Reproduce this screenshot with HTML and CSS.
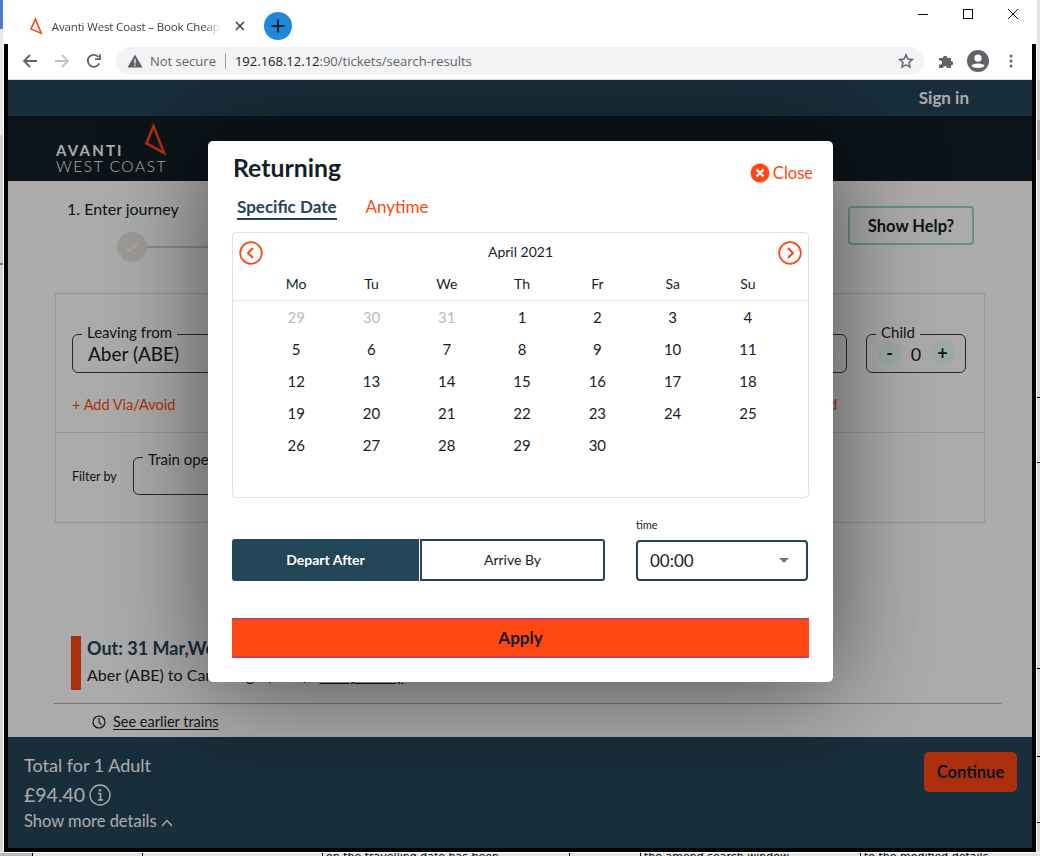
FILE: index.html
```html
<!DOCTYPE html>
<html lang="en">
<head>
    <meta charset="UTF-8">
    <meta name="viewport" content="width=device-width, initial-scale=1.0">
    <title>Avanti West Coast</title>

    <link rel="stylesheet" href="styles.css">
</head>
<body>
    <div class="side-left"></div>

    <div class="window">
        <div class="tabbar">
            <div class="tab">
                <svg class="favicon" width="14" height="18" viewBox="0 0 14 18"><path d="M6.5 2 L2 12 L12.5 16.5 Z" fill="none" stroke="#ff4713" stroke-width="1.6"/></svg>
                <span class="tab-title">Avanti West Coast – Book Cheap</span>
                <svg class="tab-x" width="10" height="10" viewBox="0 0 10 10"><path d="M1 1 L9 9 M9 1 L1 9" stroke="#3c4043" stroke-width="1.6"/></svg>
            </div>
            <div class="new-tab">
                <svg width="14" height="14" viewBox="0 0 14 14"><path d="M7 0.5 V13.5 M0.5 7 H13.5" stroke="#172530" stroke-width="2"/></svg>
            </div>
            <div class="win-controls">
                <svg width="12" height="12" viewBox="0 0 12 12"><path d="M1 6.5 H11" stroke="#111" stroke-width="1"/></svg>
                <svg width="12" height="12" viewBox="0 0 12 12"><rect x="1.5" y="1.5" width="9" height="9" fill="none" stroke="#111" stroke-width="1"/></svg>
                <svg width="12" height="12" viewBox="0 0 12 12"><path d="M1 1 L11 11 M11 1 L1 11" stroke="#111" stroke-width="1"/></svg>
            </div>
        </div>

        <div class="frame">
            <div class="toolbar">
                <svg class="tool" width="16" height="16" viewBox="0 0 16 16"><path d="M15 8 H2 M8 2 L2 8 L8 14" fill="none" stroke="#5f6368" stroke-width="1.8"/></svg>
                <svg class="tool" width="16" height="16" viewBox="0 0 16 16"><path d="M1 8 H14 M8 2 L14 8 L8 14" fill="none" stroke="#bdc1c6" stroke-width="1.8"/></svg>
                <svg class="tool" width="16" height="16" viewBox="0 0 16 16"><path d="M13.2 10.5 A6 6 0 1 1 12.5 4 M14 1.2 V6.2 H9" fill="none" stroke="#5f6368" stroke-width="1.8"/></svg>
                <div class="omnibox">
                    <svg width="16" height="14" viewBox="0 0 16 14"><path d="M8 0.5 L15.5 13.5 H0.5 Z" fill="#5f6368"/><path d="M8 5 V9.5 M8 10.5 V12" stroke="#f1f3f4" stroke-width="1.3"/></svg>
                    <span class="not-secure">Not secure</span>
                    <span class="omni-sep"></span>
                    <span class="url"><b>192.168.12.12</b>:90/tickets/search-results</span>
                    <svg class="star" width="16" height="16" viewBox="0 0 16 16"><path d="M8 1.8 L9.9 6 L14.4 6.5 L11 9.5 L12 14 L8 11.7 L4 14 L5 9.5 L1.6 6.5 L6.1 6 Z" fill="none" stroke="#5f6368" stroke-width="1.4"/></svg>
                </div>
                <svg class="puzzle" width="16" height="16" viewBox="0 0 16 16"><path d="M1 5 H5 A2.2 2.2 0 1 1 9.4 5 H13 V8 A2.2 2.2 0 1 1 13 12.4 V15 H9 A2 2 0 0 0 5 15 H1 V11.5 A2.2 2.2 0 1 0 1 7.5 Z" fill="#5f6368"/></svg>
                <svg class="avatar" width="22" height="22" viewBox="0 0 22 22"><circle cx="11" cy="11" r="11" fill="#5f6368"/><circle cx="11" cy="8.2" r="3.6" fill="#fff"/><path d="M4.4 16 C6 12.8 16 12.8 17.6 16 C15.8 18.6 6.2 18.6 4.4 16 Z" fill="#fff"/></svg>
                <svg class="dots" width="4" height="14" viewBox="0 0 4 14"><circle cx="2" cy="2" r="1.5" fill="#5f6368"/><circle cx="2" cy="7" r="1.5" fill="#5f6368"/><circle cx="2" cy="12" r="1.5" fill="#5f6368"/></svg>
            </div>

            <div class="page">
                <div class="topbar"><a class="signin">Sign in</a></div>

                <header class="site-header">
                    <div class="logo">
                        <div class="logo-avanti">AVANTI</div>
                        <div class="logo-west">WEST COAST</div>
                        <svg class="logo-mark" width="24" height="34" viewBox="0 0 24 34"><path d="M9.5 3 L2.5 20.5 L20 30 Z" fill="none" stroke="#ff4713" stroke-width="2.6"/></svg>
                    </div>
                </header>

                <main class="content">
                    <div class="steps">
                        <div class="step">
                            <div class="step-name">1. Enter journey</div>
                            <div class="step-track">
                                <span class="step-dot">
                                    <svg width="14" height="12" viewBox="0 0 14 12"><path d="M1.5 6.5 L5 10 L12.5 2" fill="none" stroke="#fff" stroke-width="1.6"/></svg>
                                </span>
                                <span class="step-line"></span>
                            </div>
                        </div>
                        <button class="help-btn">Show Help?</button>
                    </div>

                    <section class="search-box">
                        <div class="search-main">
                            <div class="field-row">
                                <fieldset class="field field-from">
                                    <legend>Leaving from</legend>
                                    <div class="field-value">Aber (ABE)</div>
                                </fieldset>
                                <fieldset class="field field-count">
                                    <legend>Adult</legend>
                                    <div class="counter">
                                        <span class="count-btn">-</span>
                                        <span class="count-num">1</span>
                                        <span class="count-btn">+</span>
                                    </div>
                                </fieldset>
                                <fieldset class="field field-count">
                                    <legend>Child</legend>
                                    <div class="counter">
                                        <span class="count-btn">-</span>
                                        <span class="count-num">0</span>
                                        <span class="count-btn">+</span>
                                    </div>
                                </fieldset>
                            </div>
                            <div class="link-row">
                                <a>+ Add Via/Avoid</a>
                                <a class="link-railcard">+ Add Railcard</a>
                            </div>
                        </div>
                        <div class="search-filter">
                            <span class="filter-label">Filter by</span>
                            <fieldset class="field field-operator">
                                <legend>Train operator</legend>
                            </fieldset>
                        </div>
                    </section>

                    <section class="journey">
                        <div class="journey-bar"></div>
                        <div>
                            <div class="journey-title">Out: 31 Mar,Wed</div>
                            <div class="journey-route">Aber (ABE) to Cambridge (CBG), <u>Edit journey</u>.</div>
                        </div>
                    </section>

                    <div class="earlier">
                        <svg width="14" height="14" viewBox="0 0 14 14"><circle cx="7" cy="7" r="6" fill="none" stroke="#111" stroke-width="1.1"/><path d="M7 3 V7 L9.5 10" fill="none" stroke="#111" stroke-width="1.1"/></svg>
                        <u>See earlier trains</u>
                    </div>
                </main>

                <footer class="basket">
                    <div class="basket-info">
                        <div class="basket-label">Total for 1 Adult</div>
                        <div class="basket-price">
                            £94.40
                            <svg width="22" height="22" viewBox="0 0 22 22"><circle cx="11" cy="11" r="10" fill="none" stroke="#fff" stroke-width="1.4"/><path d="M9 9.5 H11.5 V16 M9 16 H14" fill="none" stroke="#fff" stroke-width="1.6"/><circle cx="11" cy="6.3" r="1.2" fill="#fff"/></svg>
                        </div>
                        <div class="basket-more">
                            Show more details
                            <svg width="12" height="8" viewBox="0 0 12 8"><path d="M1 7 L6 1.5 L11 7" fill="none" stroke="#fff" stroke-width="1.4"/></svg>
                        </div>
                    </div>
                    <button class="continue-btn">Continue</button>
                </footer>

                <div class="overlay"></div>

                <div class="modal">
                    <div class="modal-head">
                        <h2>Returning</h2>
                        <a class="close">
                            <svg width="20" height="20" viewBox="0 0 20 20"><circle cx="10" cy="10" r="9.5" fill="#ff4713"/><path d="M6.5 6.5 L13.5 13.5 M13.5 6.5 L6.5 13.5" stroke="#fff" stroke-width="2.4"/></svg>
                            Close
                        </a>
                    </div>

                    <div class="tabs">
                        <a class="tab-on">Specific Date</a>
                        <a class="tab-off">Anytime</a>
                    </div>

                    <div class="calendar">
                        <div class="cal-head">
                            <svg width="24" height="24" viewBox="0 0 24 24"><circle cx="12" cy="12" r="10.8" fill="none" stroke="#ff4713" stroke-width="1.8"/><path d="M14 7 L9 12 L14 17" fill="none" stroke="#ff4713" stroke-width="2"/></svg>
                            <span class="cal-month">April 2021</span>
                            <svg width="24" height="24" viewBox="0 0 24 24"><circle cx="12" cy="12" r="10.8" fill="none" stroke="#ff4713" stroke-width="1.8"/><path d="M10 7 L15 12 L10 17" fill="none" stroke="#ff4713" stroke-width="2"/></svg>
                        </div>
                        <div class="cal-grid cal-week">
                            <span>Mo</span><span>Tu</span><span>We</span><span>Th</span><span>Fr</span><span>Sa</span><span>Su</span>
                        </div>
                        <div class="cal-grid cal-days">
                            <span class="muted">29</span><span class="muted">30</span><span class="muted">31</span><span>1</span><span>2</span><span>3</span><span>4</span>
                            <span>5</span><span>6</span><span>7</span><span>8</span><span>9</span><span>10</span><span>11</span>
                            <span>12</span><span>13</span><span>14</span><span>15</span><span>16</span><span>17</span><span>18</span>
                            <span>19</span><span>20</span><span>21</span><span>22</span><span>23</span><span>24</span><span>25</span>
                            <span>26</span><span>27</span><span>28</span><span>29</span><span>30</span>
                        </div>
                    </div>

                    <div class="when-row">
                        <div class="toggle">
                            <button class="toggle-on">Depart After</button>
                            <button class="toggle-off">Arrive By</button>
                        </div>
                        <div class="time-wrap">
                            <div class="time-label">time</div>
                            <div class="time-select">
                                <span>00:00</span>
                                <i class="caret"></i>
                            </div>
                        </div>
                    </div>

                    <button class="apply-btn">Apply</button>
                </div>
            </div>
        </div>
    </div>

    <div class="side-right"></div>

    <div class="desktop-strip">
        <span></span>
        <span></span>
        <span></span>
        <span>on the travelling date has been</span>
        <span></span>
        <span>the amend search window</span>
        <span>to the modified details</span>
    </div>
</body>
</html>
```

FILE: styles.css
```css
* {
    box-sizing: border-box;
}

body {
    margin: 0;
    width: 1040px;
    height: 856px;
    overflow: hidden;
    display: grid;
    grid-template-columns: 3px 1034px 3px;
    grid-template-rows: 852px 4px;
    background-color: #d6d6d6;
    font-family: Lato, sans-serif;
    color: #141e28;
}

button {
    font-family: inherit;
    cursor: pointer;
}

u {
    text-underline-offset: 2px;
}

.side-left {
    background: linear-gradient(#4f78d8 0 29px, #e8e8e8 29px 135px, #cfcfcf 135px 263px, #3a9a3a 263px 265px, #d4d4d4 265px);
}

.side-right {
    background: linear-gradient(#e4e4e4 0 80px, #cfcfcf 80px 120px, #a8a8a8 120px 160px, #d8d8d8 160px 397px, #000 397px 398px, #d8d8d8 398px 462px, #000 462px 463px, #d8d8d8 463px 668px, #000 668px 669px, #d8d8d8 669px 756px, #000 756px 757px, #d8d8d8 757px 822px, #000 822px 823px, #d8d8d8 823px);
}

.window {
    background-color: #fff;
    display: flex;
    flex-direction: column;
}

/* browser chrome */
.tabbar {
    height: 44px;
    display: flex;
    align-items: center;
    padding-top: 8px;
    padding-left: 26px;
}

.tab {
    width: 216px;
    display: flex;
    align-items: center;
}

.favicon {
    margin-right: 9px;
}

.tab-title {
    width: 172px;
    white-space: nowrap;
    overflow: hidden;
    font-family: "Open Sans", sans-serif;
    font-size: 11.5px;
    letter-spacing: -0.15px;
    color: #3c4043;
    -webkit-mask-image: linear-gradient(to right, #000 90%, transparent);
    mask-image: linear-gradient(to right, #000 90%, transparent);
}

.tab-x {
    margin-left: 14px;
}

.new-tab {
    width: 28px;
    height: 28px;
    margin-left: 19px;
    border-radius: 50%;
    background-color: #1e88dc;
    display: flex;
    align-items: center;
    justify-content: center;
}

.win-controls {
    margin-left: auto;
    margin-top: -24px;
    margin-right: 18px;
    display: flex;
    gap: 33px;
}

.frame {
    flex: 1;
    margin: 0 1px;
    border-left: 4px solid #000;
    border-right: 4px solid #000;
    border-bottom: 4px solid #000;
    display: flex;
    flex-direction: column;
}

.toolbar {
    height: 36px;
    display: flex;
    align-items: center;
    padding-bottom: 1px;
    padding-left: 14px;
    background-color: #fff;
    border-bottom: 1px solid #dadce0;
}

.tool {
    margin-right: 16px;
}

.omnibox {
    width: 808px;
    height: 28px;
    margin-left: -2px;
    padding: 0 10px 0 11px;
    border-radius: 14px;
    background-color: #f1f3f4;
    display: flex;
    align-items: center;
    font-family: "Open Sans", sans-serif;
    font-size: 13px;
    color: #5f6368;
}

.not-secure {
    margin-left: 7px;
}

.omni-sep {
    width: 1px;
    height: 16px;
    margin: 0 9px;
    background-color: #9aa0a6;
}

.url b {
    font-weight: 400;
    color: #202124;
}

.star {
    margin-left: auto;
}

.puzzle {
    margin-left: 14px;
}

.avatar {
    margin-left: 13px;
}

.dots {
    margin-left: 20px;
}

/* page */
.page {
    position: relative;
    flex: 1;
    overflow: hidden;
    background-color: #fff;
    display: flex;
    flex-direction: column;
}

.topbar {
    height: 36px;
    padding-right: 63px;
    padding-bottom: 2px;
    background-color: #254557;
    display: flex;
    align-items: center;
    justify-content: flex-end;
}

.signin {
    color: #fff;
    font-size: 17px;
    font-weight: 700;
}

.site-header {
    height: 65px;
    padding-left: 48px;
    background-color: #131e28;
}

.logo {
    position: relative;
    padding-top: 27px;
    color: #fff;
}

.logo-avanti {
    font-size: 15px;
    line-height: 15px;
    font-weight: 700;
    letter-spacing: 2.2px;
}

.logo-west {
    font-size: 15.5px;
    line-height: 17px;
    font-weight: 300;
    letter-spacing: 1.55px;
}

.logo-mark {
    position: absolute;
    left: 88px;
    top: 7px;
}

.content {
    flex: 1;
    position: relative;
}

.steps {
    height: 112px;
    padding: 20px 58px 0 59px;
    display: flex;
    justify-content: space-between;
    align-items: flex-start;
}

.step-name {
    font-size: 16px;
    line-height: 20px;
    margin-top: -2px;
}

.step-track {
    display: flex;
    align-items: center;
    margin-top: 13px;
    margin-left: 50px;
}

.step-dot {
    width: 30px;
    height: 30px;
    border-radius: 50%;
    background-color: #ece8e0;
    display: flex;
    align-items: center;
    justify-content: center;
}

.step-line {
    width: 100px;
    height: 2px;
    background-color: #d6d2ca;
}

.help-btn {
    width: 126px;
    height: 39px;
    margin-top: 5px;
    border: 2px solid #8cdebf;
    border-radius: 4px;
    background-color: #fff;
    color: #141e28;
    font-size: 16.5px;
    font-weight: 700;
}

.search-box {
    margin: 0 47px;
    height: 230px;
    border: 1px solid #e3e3d7;
}

.search-main {
    height: 139px;
    padding: 30px 18px 0 16px;
    border-bottom: 1px solid #e3e3d7;
}

.field-row {
    display: flex;
    gap: 19px;
}

.field {
    margin: 0;
    padding: 0;
    height: 49px;
    min-width: 0;
    border: 1px solid #254557;
    border-radius: 6px;
}

.field legend {
    margin-left: 9px;
    padding: 0 5px 4px;
    font-size: 15px;
    line-height: 16px;
}

.field-from {
    width: 300px;
    margin-right: auto;
}

.field-value {
    padding-left: 15px;
    font-size: 19px;
    line-height: 25px;
    margin-top: -3px;
}

.field-count {
    width: 100px;
}

.counter {
    display: flex;
    align-items: center;
    justify-content: space-between;
    padding: 0 10px;
    margin-top: -3px;
}

.count-btn {
    width: 25px;
    height: 25px;
    border-radius: 50%;
    background-color: #ebfff5;
    font-weight: 700;
    font-size: 18px;
    line-height: 24px;
    text-align: center;
}

.count-num {
    font-size: 18px;
}

.link-row {
    display: flex;
    justify-content: space-between;
    margin-top: 22px;
    color: #ff4713;
    font-size: 14.5px;
    line-height: 20px;
}

.link-railcard {
    margin-right: 129px;
}

.search-filter {
    height: 89px;
    padding: 14px 16px 0;
    display: flex;
    align-items: flex-start;
}

.filter-label {
    font-size: 12.5px;
    margin-top: 22px;
    width: 61px;
}

.field-operator {
    width: 300px;
    height: 48px;
}

.field-operator legend {
    padding: 4px 5px 0;
}

.journey {
    position: absolute;
    left: 63px;
    top: 455px;
    height: 54px;
    display: flex;
    gap: 6px;
}

.journey-bar {
    width: 10px;
    background-color: #ff4713;
}

.journey-title {
    font-size: 18px;
    line-height: 24px;
    font-weight: 700;
    color: #254557;
}

.journey-route {
    margin-top: 4px;
    font-size: 16px;
    line-height: 22px;
}

.journey-route u {
    margin-left: 4px;
}

.earlier {
    position: absolute;
    left: 46px;
    right: 31px;
    top: 522px;
    height: 34px;
    padding: 2px 0 0 38px;
    border-top: 1px solid #b0b0b0;
    display: flex;
    align-items: center;
    gap: 7px;
    font-size: 14.5px;
}

.basket {
    height: 111px;
    padding: 15px 15px 0 16px;
    background-color: #254557;
    color: #fff;
    display: flex;
    justify-content: space-between;
    align-items: flex-start;
}

.basket-label {
    font-size: 18px;
    line-height: 26px;
}

.basket-price {
    margin-top: 3px;
    font-size: 19.5px;
    line-height: 28px;
    display: flex;
    align-items: center;
    gap: 4px;
}

.basket-more {
    font-size: 16.5px;
    line-height: 24px;
}

.continue-btn {
    width: 93px;
    height: 40px;
    border: none;
    border-radius: 5px;
    background-color: #ff4713;
    color: #141e28;
    font-size: 16.5px;
    font-weight: 700;
}

.overlay {
    position: absolute;
    inset: 0;
    background-color: rgba(0, 0, 0, 0.33);
}

/* returning date modal */
.modal {
    position: absolute;
    left: 200px;
    top: 61px;
    width: 625px;
    height: 541px;
    padding: 12px 24px 0;
    border-radius: 5px;
    background-color: #fff;
    box-shadow: 0 4px 100px rgba(0, 0, 0, 0.55);
}

.modal-head {
    display: flex;
    justify-content: space-between;
}

.modal-head h2 {
    margin: 0 0 0 1px;
    font-size: 24.8px;
    line-height: 30px;
    font-weight: 700;
}

.close {
    margin-top: 10px;
    margin-right: -4px;
    height: 20px;
    display: flex;
    align-items: center;
    gap: 3px;
    color: #ff4713;
    font-size: 16.5px;
}

.tabs {
    margin-top: 13px;
    padding-left: 5px;
    display: flex;
    gap: 29px;
    font-size: 17px;
    line-height: 22px;
}

.tab-on {
    height: 24px;
    border-bottom: 2px solid #254557;
    font-weight: 700;
    color: #254557;
}

.tab-off {
    color: #ff4713;
}

.calendar {
    margin-top: 12px;
    height: 266px;
    border: 1px solid #e0e0e0;
    border-radius: 4px;
}

.cal-head {
    height: 40px;
    padding: 0 6px;
    display: flex;
    justify-content: space-between;
    align-items: center;
    font-size: 14px;
}

.cal-month {
    margin-bottom: 3px;
}

.cal-grid {
    display: grid;
    grid-template-columns: repeat(7, 75.3px);
    padding-left: 25.5px;
    text-align: center;
}

.cal-week {
    height: 28px;
    padding-top: 2px;
    border-bottom: 1px solid #e0e0e0;
    font-size: 14px;
    line-height: 18px;
}

.cal-days {
    grid-auto-rows: 32px;
    font-size: 15px;
    line-height: 32px;
}

.muted {
    color: #b8bcc0;
}

.when-row {
    margin-top: 20px;
    padding-right: 1px;
    display: flex;
    justify-content: space-between;
    align-items: flex-end;
}

.toggle {
    display: flex;
    gap: 1px;
}

.toggle button {
    height: 42px;
    padding-bottom: 2px;
    font-size: 14px;
}

.toggle-on {
    width: 187px;
    border: none;
    border-radius: 3px 0 0 3px;
    background-color: #234658;
    color: #fff;
    font-weight: 700;
}

.toggle-off {
    width: 185px;
    border: 2px solid #234658;
    border-radius: 0 3px 3px 0;
    background-color: #fff;
    color: #141e28;
}

.time-label {
    font-size: 11px;
    line-height: 14px;
    margin-bottom: 8px;
}

.time-select {
    width: 172px;
    height: 41px;
    padding: 0 17px 0 12px;
    border: 2px solid #234658;
    border-radius: 4px;
    display: flex;
    justify-content: space-between;
    align-items: center;
    font-size: 17px;
}

.caret {
    width: 0;
    height: 0;
    border-left: 5px solid transparent;
    border-right: 5px solid transparent;
    border-top: 5px solid #777;
}

.apply-btn {
    width: 577px;
    height: 40px;
    margin-top: 37px;
    padding-bottom: 3px;
    border: none;
    border-top: 2px solid #c8434f;
    border-bottom: 2px solid #c8434f;
    background-color: #ff4713;
    color: #141e28;
    font-size: 17px;
    font-weight: 700;
}

.desktop-strip {
    grid-column: 1 / -1;
    display: grid;
    grid-template-columns: 32px 110px 180px 247px 71px 220px 1fr;
    overflow: hidden;
    border-top: 1px solid #fff;
    background-color: #e4e4e4;
    font-family: "DejaVu Sans", sans-serif;
    font-size: 11px;
    line-height: 8px;
    color: #000;
}

.desktop-strip span {
    height: 12px;
    padding-left: 3px;
    white-space: nowrap;
    border-left: 1px solid #000;
}

.desktop-strip span:first-child {
    border-left: none;
    background-color: #b8b8b8;
}
```
